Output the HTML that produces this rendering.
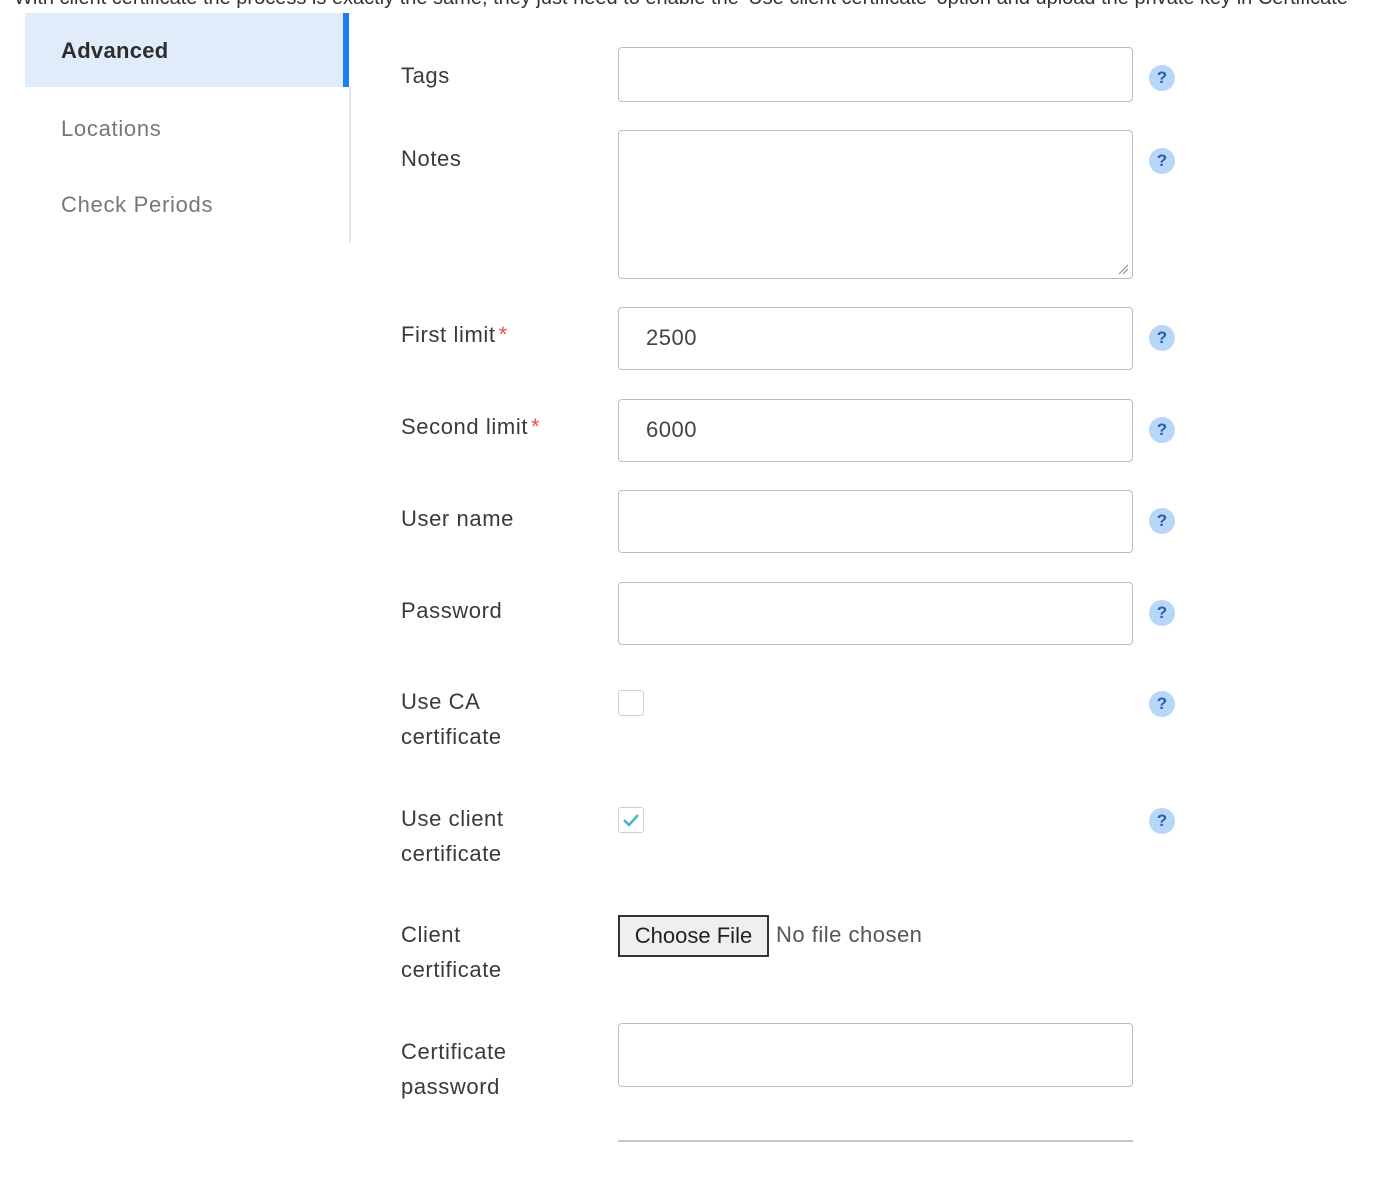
<!DOCTYPE html>
<html><head><meta charset="utf-8"><style>
body{margin:0;width:1392px;height:1180px;background:#fff;position:relative;overflow:hidden;font-family:"Liberation Sans",sans-serif;color:#333}
.a{position:absolute}
.top{left:14px;top:-13px;font-size:20px;white-space:nowrap;color:#333}
.lab{position:absolute;left:401px;font-size:22px;line-height:35px;color:#3a3a3a;letter-spacing:0.6px}
.req{color:#e05555;margin-left:3px}
.inp{position:absolute;left:618px;width:513px;border:1.5px solid #bdbdbd;border-radius:4px;background:#fff}
.val{position:absolute;left:27px;font-size:22px;color:#444;letter-spacing:0.5px}
.help{position:absolute;left:1149px;width:26px;height:26px;border-radius:50%;background:#b8d6f8;color:#2a5cb0;font-weight:bold;font-size:17px;text-align:center;line-height:26px}
.cb{position:absolute;left:618px;width:24px;height:24px;border:1.5px solid #d0d0d0;border-radius:3px;background:#fff}
.nav{position:absolute;left:61px;font-size:22px;color:#777;letter-spacing:0.7px}
</style></head><body>
<div class="a top">With client certificate the process is exactly the same, they just need to enable the 'Use client certificate' option and upload the private key in Certificate</div>

<div class="a" style="left:25px;top:13px;width:318px;height:74px;background:#e1ecfb"></div>
<div class="a" style="left:343px;top:13px;width:6px;height:74px;background:#1a7ff0"></div>
<div class="a" style="left:349px;top:87px;width:2px;height:156px;background:#e3e6ea"></div>
<div class="nav" style="top:38px;color:#2d2d2d;font-weight:bold;letter-spacing:0.3px">Advanced</div>
<div class="nav" style="top:116px">Locations</div>
<div class="nav" style="top:192px">Check Periods</div>

<div class="lab" style="top:58px">Tags</div>
<div class="inp" style="top:47px;height:53px"></div>
<div class="help" style="top:65px">?</div>

<div class="lab" style="top:141px">Notes</div>
<div class="inp" style="top:130px;height:147px"><svg class="a" style="right:3px;bottom:3px" width="12" height="12"><path d="M2 11L11 2M6 11L11 6" stroke="#888" stroke-width="1"/></svg></div>
<div class="help" style="top:148px">?</div>

<div class="lab" style="top:317px">First limit<span class="req">*</span></div>
<div class="inp" style="top:307px;height:61px"><span class="val" style="top:17px">2500</span></div>
<div class="help" style="top:325px">?</div>

<div class="lab" style="top:409px">Second limit<span class="req">*</span></div>
<div class="inp" style="top:399px;height:61px"><span class="val" style="top:17px">6000</span></div>
<div class="help" style="top:417px">?</div>

<div class="lab" style="top:501px">User name</div>
<div class="inp" style="top:490px;height:61px"></div>
<div class="help" style="top:508px">?</div>

<div class="lab" style="top:593px">Password</div>
<div class="inp" style="top:582px;height:61px"></div>
<div class="help" style="top:600px">?</div>

<div class="lab" style="top:684px">Use CA<br>certificate</div>
<div class="cb" style="top:690px"></div>
<div class="help" style="top:691px">?</div>

<div class="lab" style="top:801px">Use client<br>certificate</div>
<div class="cb" style="top:807px"><svg class="a" style="left:3px;top:4px" width="18" height="16"><path d="M2 8L7 13L16 3" stroke="#45b5d0" stroke-width="2.5" fill="none"/></svg></div>
<div class="help" style="top:808px">?</div>

<div class="lab" style="top:917px">Client<br>certificate</div>
<div class="a" style="left:618px;top:915px;width:147px;height:38px;border:2px solid #333;background:#efefef;font-size:22px;line-height:38px;text-align:center;color:#222;box-sizing:content-box">Choose File</div>
<div class="a" style="left:776px;top:922px;font-size:22px;color:#555;letter-spacing:0.5px">No file chosen</div>

<div class="lab" style="top:1034px">Certificate<br>password</div>
<div class="inp" style="top:1023px;height:62px"></div>

<div class="a" style="left:618px;top:1140px;width:515px;height:1.5px;background:#c6c6c6"></div>
</body></html>
